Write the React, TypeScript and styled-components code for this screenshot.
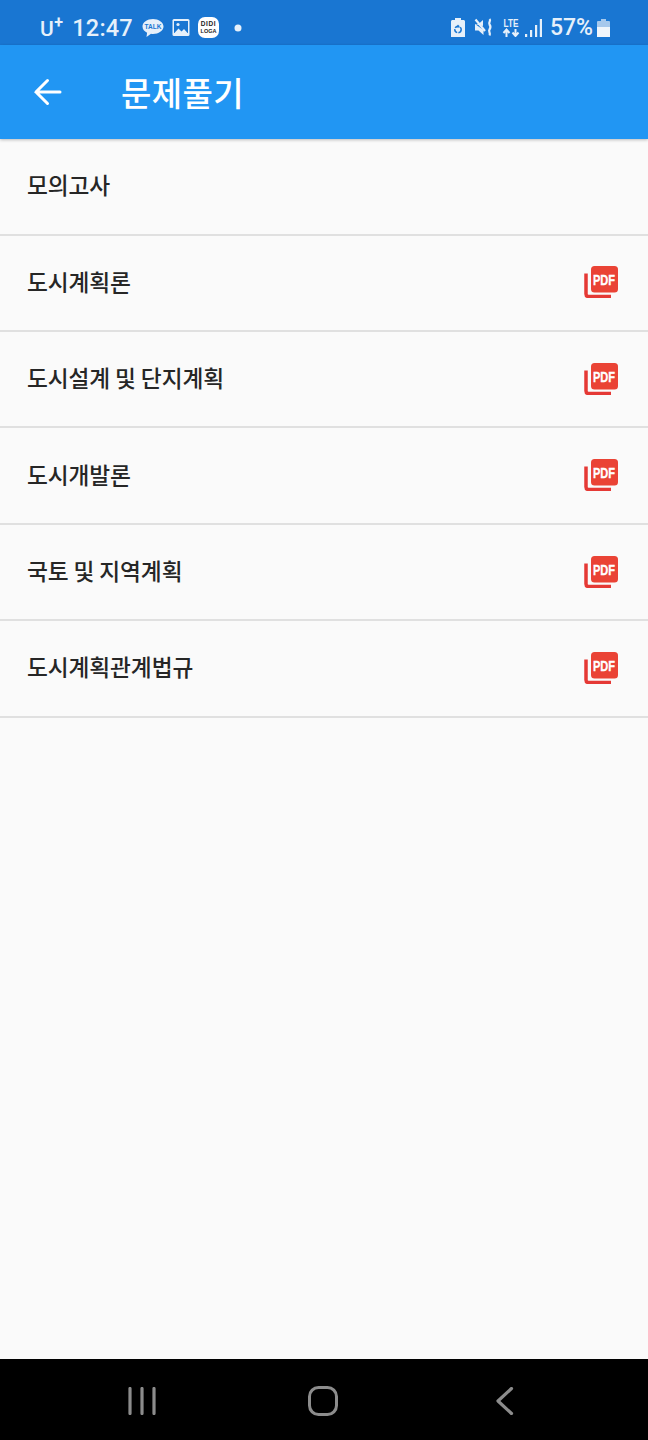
import React from "react";
import styled, { createGlobalStyle } from "styled-components";

const Global = createGlobalStyle`
  html, body { margin: 0; padding: 0; background: #fafafa; }
  #root { width: 648px; height: 1440px; }
`;
const Page = styled.div`
  width: 648px; height: 1440px; display: flex; flex-direction: column; overflow: hidden;
  background: #fafafa; font-family: Roboto, "Noto Sans CJK KR", sans-serif;
`;
const StatusBar = styled.div`
  height: 45px; flex: none; background: #1976d2; color: #e6f0fa; display: flex; align-items: center;
  justify-content: space-between; padding: 10px 38px 0 40px; box-sizing: border-box;
`;
const StatusGroup = styled.div`display: flex; align-items: center;`;
const Carrier = styled.span`
  font-size: 21px; font-weight: 500; line-height: 24px; margin-top: 2px; display: flex; letter-spacing: .4px;
  sup { font-size: 16px; line-height: 15px; margin-top: -2px; font-weight: 700; }
`;
const Clock = styled.span`font-size: 23.5px; font-weight: 500; line-height: 26px; margin-left: 9px; letter-spacing: .2px;`;
const Percent = styled.span`font-size: 23px; font-weight: 500; line-height: 26px; margin-left: 8px;`;
const StatusSvg = styled.svg<{ $gap?: number }>`display: block; flex: none; margin-left: ${p => p.$gap ?? 0}px;`;
const AppBar = styled.header`
  height: 94px; flex: none; background: #2196f3; display: flex; align-items: center; padding-left: 33px;
  box-shadow: 0 1px 3px rgba(0,0,0,.25); position: relative; z-index: 1; box-sizing: border-box;
`;
const BackArrow = styled.svg`display: block; flex: none;`;
const Title = styled.h1`
  margin: 0 0 0 58px; font-size: 33px; line-height: 40px; font-weight: 500; color: #fff;
  font-family: "Noto Sans CJK KR", sans-serif; letter-spacing: .4px;
`;
const List = styled.main`flex: 1; display: flex; flex-direction: column; min-height: 0;`;
const Row = styled.div`
  height: 96.35px; flex: none; box-sizing: border-box; border-bottom: 2px solid #e0e0e0; display: flex;
  align-items: center; justify-content: space-between; padding: 0 30px 2px 27px;
  &:first-child { height: 96.8px; }
`;
const RowLabel = styled.span`
  font-size: 22.7px; font-weight: 500; line-height: 30px; color: #262626; letter-spacing: -.1px;
  font-family: "Noto Sans CJK KR", sans-serif;
`;
const Pdf = styled.svg`display: block; flex: none; margin-top: 1px;`;
const NavBar = styled.nav`
  height: 81px; flex: none; background: #000; display: flex; align-items: center;
  padding: 2px 0 0 128px; box-sizing: border-box;
`;
const NavIcon = styled.svg<{ $gap?: number }>`display: block; flex: none; margin-left: ${p => p.$gap ?? 0}px;`;

const PdfIcon = () => (
  <Pdf width="35" height="32" viewBox="0 0 35 32">
    <path d="M3 7.500v20.500c0 1.400 1.100 2.500 2.500 2.500h22.500" fill="none" stroke="#e53935" strokeWidth="3.500" />
    <rect x="8" y="0" width="27" height="26.500" rx="3.500" fill="#ea4335" />
    <text transform="translate(21 19) scale(.79 1)" x="0" y="0" textAnchor="middle" fontFamily="'Liberation Sans', sans-serif" fontSize="14" fontWeight="700" fill="#fff" stroke="#fff" strokeWidth=".3">PDF</text>
  </Pdf>
);

const items = ["모의고사", "도시계획론", "도시설계 및 단지계획", "도시개발론", "국토 및 지역계획", "도시계획관계법규"];

export default function App() {
  return (
    <Page>
      <Global />
      <StatusBar>
        <StatusGroup>
          <Carrier>U<sup>+</sup></Carrier>
          <Clock>12:47</Clock>
          <StatusSvg $gap={9} width="22" height="20" viewBox="0 0 22 20">
            <path d="M11 1C5.200 1 .5 4.400 .5 8.500c0 2.800 1.900 5 4.600 6.200L4.500 19l4.500-3.200c.7.1 1.300.2 2 .2 5.500 0 10.500-3.400 10.500-7.500S16.500 1 11 1z" fill="#e6f0fa" />
            <text x="11" y="11" textAnchor="middle" fontSize="6.500" fontWeight="700" fill="#1976d2" fontFamily="'Liberation Sans', sans-serif">TALK</text>
          </StatusSvg>
          <StatusSvg $gap={8} width="18" height="17" viewBox="0 0 18 17">
            <rect x="0.500" width="17" height="17" rx="1.500" fill="#e6f0fa" />
            <rect x="2" y="2" width="14" height="12" fill="#1976d2" />
            <path d="M2 14.500l4.500-5 3 3 2.500-2.500 4 4.500z" fill="#e6f0fa" />
            <circle cx="6" cy="5.500" r="1.600" fill="#e6f0fa" />
          </StatusSvg>
          <StatusSvg $gap={8} width="21" height="21" viewBox="0 0 21 21">
            <rect width="21" height="21" rx="7" fill="#fff" />
            <text x="10.500" y="9" textAnchor="middle" fontSize="6.500" fontWeight="700" fill="#222" fontFamily="'Liberation Sans', sans-serif" letterSpacing=".6">DIDI</text>
            <text x="10.500" y="16" textAnchor="middle" fontSize="5.500" fontWeight="700" fill="#222" fontFamily="'Liberation Sans', sans-serif">LOGA</text>
          </StatusSvg>
          <StatusSvg $gap={15} width="8" height="8" viewBox="0 0 8 8"><circle cx="4" cy="4" r="3.500" fill="#e6f0fa" /></StatusSvg>
        </StatusGroup>
        <StatusGroup>
          <StatusSvg width="14" height="19" viewBox="0 0 14 19">
            <path d="M4 0h6v2h2.500c.8 0 1.500.7 1.500 1.500V19H0V3.500C0 2.700.7 2 1.500 2H4z" fill="#e6f0fa" />
            <path d="M7 6.500l2 3H5z" fill="#1976d2" />
            <circle cx="7" cy="11.500" r="3.200" fill="none" stroke="#1976d2" strokeWidth="1.500" strokeDasharray="4.500 1.200" />
          </StatusSvg>
          <StatusSvg $gap={9} width="19" height="19" viewBox="0 0 19 19">
            <path d="M1 6h3.500L9 2v6zM1 6v6.500h3.500L9.500 17v-5z" fill="#e6f0fa" />
            <path d="M1.500 1.500L11 13" stroke="#e6f0fa" strokeWidth="2.200" />
            <path d="M15.500 1c2 2-1.500 3.500 0 5.500s1.500 3 0 5 1.500 3.500 0 6" fill="none" stroke="#e6f0fa" strokeWidth="2.200" />
          </StatusSvg>
          <StatusSvg $gap={9} width="18" height="19" viewBox="0 0 18 19">
            <text transform="translate(9 8.500) scale(.82 1)" x="0" y="0" textAnchor="middle" fontSize="10" fontWeight="700" fill="#e6f0fa" fontFamily="'Liberation Sans', sans-serif">LTE</text>
            <path d="M4.500 19v-7M1.500 15l3-3.500 3 3.500M13.500 11v7M10.500 14.500l3 3.500 3-3.500" fill="none" stroke="#e6f0fa" strokeWidth="2" />
          </StatusSvg>
          <StatusSvg $gap={5} width="17" height="18" viewBox="0 0 17 18">
            <g fill="#e6f0fa"><rect x="0" y="15" width="2.200" height="3" /><rect x="5" y="11" width="2.200" height="7" /><rect x="10" y="6" width="2.200" height="12" /><rect x="14.800" y="0" width="2.200" height="18" /></g>
          </StatusSvg>
          <Percent>57%</Percent>
          <StatusSvg $gap={4} width="13" height="18" viewBox="0 0 13 18">
            <path d="M4 0h5v2h3a1 1 0 0 1 1 1v15H0V3a1 1 0 0 1 1-1h3z" fill="#a6c8ec" />
            <path d="M0 8h13v10H0z" fill="#f0f6fc" />
          </StatusSvg>
        </StatusGroup>
      </StatusBar>
      <AppBar>
        <BackArrow width="30" height="28" viewBox="0 0 30 28">
          <path d="M27 14H3M14.500 2.500L3 14l11.500 11.500" fill="none" stroke="#fff" strokeWidth="3" strokeLinecap="round" />
        </BackArrow>
        <Title>문제풀기</Title>
      </AppBar>
      <List>
        {items.map((t, i) => (
          <Row key={t}>
            <RowLabel>{t}</RowLabel>
            {i > 0 && <PdfIcon />}
          </Row>
        ))}
      </List>
      <NavBar>
        <NavIcon width="28" height="28" viewBox="0 0 28 28">
          <path d="M2 1.500v25M14 1.500v25M26 1.500v25" stroke="#8c8c8c" strokeWidth="3.200" strokeLinecap="round" />
        </NavIcon>
        <NavIcon $gap={152} width="30" height="30" viewBox="0 0 30 30">
          <rect x="1.500" y="1.500" width="27" height="27" rx="9" fill="none" stroke="#8c8c8c" strokeWidth="3" />
        </NavIcon>
        <NavIcon $gap={158} width="18" height="28" viewBox="0 0 18 28">
          <path d="M15.500 1.500L2 14l13.500 12.500" fill="none" stroke="#8c8c8c" strokeWidth="3.200" strokeLinecap="round" strokeLinejoin="round" />
        </NavIcon>
      </NavBar>
    </Page>
  );
}
